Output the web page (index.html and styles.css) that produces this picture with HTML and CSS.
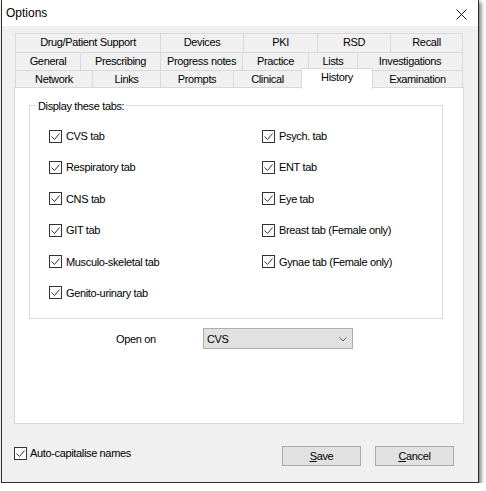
FILE: index.html
```html
<!DOCTYPE html>
<html lang="en">
<head>
<meta charset="utf-8">
<title>Options</title>
<link rel="stylesheet" href="styles.css">
</head>
<body>
<div class="window">
  <div class="titlebar">
    <span class="title">Options</span>
    <svg class="close" width="11" height="11" viewBox="0 0 11 11" aria-label="Close">
      <path d="M0.5 0.5 L10.5 10.5 M10.5 0.5 L0.5 10.5" stroke="#111" stroke-width="1" fill="none"/>
    </svg>
  </div>

  <div class="content">
    <div class="tabs">
      <div class="tab-row row1">
        <div class="tab">Drug/Patient Support</div>
        <div class="tab">Devices</div>
        <div class="tab">PKI</div>
        <div class="tab">RSD</div>
        <div class="tab">Recall</div>
      </div>
      <div class="tab-row row2">
        <div class="tab">General</div>
        <div class="tab">Prescribing</div>
        <div class="tab">Progress notes</div>
        <div class="tab">Practice</div>
        <div class="tab">Lists</div>
        <div class="tab">Investigations</div>
      </div>
      <div class="tab-row row3">
        <div class="tab">Network</div>
        <div class="tab">Links</div>
        <div class="tab">Prompts</div>
        <div class="tab">Clinical</div>
        <div class="tab active">History</div>
        <div class="tab">Examination</div>
      </div>
    </div>

    <div class="panel">
      <div class="group">
        <div class="group-title">Display these tabs:</div>
        <div class="checks">
          <label class="check"><span class="box"><svg width="11" height="11" viewBox="0 0 11 11"><path d="M1.5 5.5 L4.5 8.5 L9.5 2.5" stroke="#333" stroke-width="1" fill="none"/></svg></span>CVS tab</label>
          <label class="check"><span class="box"><svg width="11" height="11" viewBox="0 0 11 11"><path d="M1.5 5.5 L4.5 8.5 L9.5 2.5" stroke="#333" stroke-width="1" fill="none"/></svg></span>Psych. tab</label>
          <label class="check"><span class="box"><svg width="11" height="11" viewBox="0 0 11 11"><path d="M1.5 5.5 L4.5 8.5 L9.5 2.5" stroke="#333" stroke-width="1" fill="none"/></svg></span>Respiratory tab</label>
          <label class="check"><span class="box"><svg width="11" height="11" viewBox="0 0 11 11"><path d="M1.5 5.5 L4.5 8.5 L9.5 2.5" stroke="#333" stroke-width="1" fill="none"/></svg></span>ENT tab</label>
          <label class="check"><span class="box"><svg width="11" height="11" viewBox="0 0 11 11"><path d="M1.5 5.5 L4.5 8.5 L9.5 2.5" stroke="#333" stroke-width="1" fill="none"/></svg></span>CNS tab</label>
          <label class="check"><span class="box"><svg width="11" height="11" viewBox="0 0 11 11"><path d="M1.5 5.5 L4.5 8.5 L9.5 2.5" stroke="#333" stroke-width="1" fill="none"/></svg></span>Eye tab</label>
          <label class="check"><span class="box"><svg width="11" height="11" viewBox="0 0 11 11"><path d="M1.5 5.5 L4.5 8.5 L9.5 2.5" stroke="#333" stroke-width="1" fill="none"/></svg></span>GIT tab</label>
          <label class="check"><span class="box"><svg width="11" height="11" viewBox="0 0 11 11"><path d="M1.5 5.5 L4.5 8.5 L9.5 2.5" stroke="#333" stroke-width="1" fill="none"/></svg></span>Breast tab (Female only)</label>
          <label class="check"><span class="box"><svg width="11" height="11" viewBox="0 0 11 11"><path d="M1.5 5.5 L4.5 8.5 L9.5 2.5" stroke="#333" stroke-width="1" fill="none"/></svg></span>Musculo-skeletal tab</label>
          <label class="check"><span class="box"><svg width="11" height="11" viewBox="0 0 11 11"><path d="M1.5 5.5 L4.5 8.5 L9.5 2.5" stroke="#333" stroke-width="1" fill="none"/></svg></span>Gynae tab (Female only)</label>
          <label class="check"><span class="box"><svg width="11" height="11" viewBox="0 0 11 11"><path d="M1.5 5.5 L4.5 8.5 L9.5 2.5" stroke="#333" stroke-width="1" fill="none"/></svg></span>Genito-urinary tab</label>
        </div>
      </div>

      <div class="open-on">
        <span class="open-label">Open on</span>
        <div class="combo">
          <span class="combo-value">CVS</span>
          <svg class="chevron" width="8" height="5" viewBox="0 0 8 5"><path d="M0.5 0.5 L4 4 L7.5 0.5" stroke="#606060" stroke-width="1" fill="none"/></svg>
        </div>
      </div>
    </div>

    <div class="footer">
      <label class="check auto-cap"><span class="box"><svg width="11" height="11" viewBox="0 0 11 11"><path d="M1.5 5.5 L4.5 8.5 L9.5 2.5" stroke="#333" stroke-width="1" fill="none"/></svg></span>Auto-capitalise names</label>
      <div class="buttons">
        <button class="btn"><u>S</u>ave</button>
        <button class="btn"><u>C</u>ancel</button>
      </div>
    </div>
  </div>
</div>
</body>
</html>
```

FILE: styles.css
```css
html, body {
  margin: 0;
  padding: 0;
  background: #ffffff;
}

body {
  font-family: "Liberation Sans", Arial, sans-serif;
  font-size: 11px;
  letter-spacing: -0.35px;
  color: #000;
}

/* dialog frame */
.window {
  width: 478px;
  height: 484px;
  box-sizing: border-box;
  margin: -1px 0 0 1px;
  border: 1px solid #2e2e2e;
  background: #f0f0f0;
  box-shadow: 2px 3px 4px rgba(0, 0, 0, 0.55);
  display: flex;
  flex-direction: column;
}

.titlebar {
  height: 26px;
  flex: none;
  background: #ffffff;
  display: flex;
  align-items: center;
  justify-content: space-between;
  padding: 0 11px 0 4px;
}

.title {
  font-size: 12px;
  letter-spacing: 0;
  line-height: 16px;
}

.close {
  display: block;
  margin-top: 2px;
}

.content {
  flex: 1;
  padding: 7px 14px 16px 12px;
  display: flex;
  flex-direction: column;
}

/* tab strip: three stacked rows */
.tabs {
  margin-left: 1px;
}

.tab-row {
  display: grid;
}

.row1 {
  grid-template-columns: 145px 83px 74px 73px 73px;
  height: 19px;
}

.row2 {
  grid-template-columns: 65px 80px 82px 66px 49px 106px;
  height: 18px;
}

.row3 {
  grid-template-columns: 77px 68px 73px 68px 71px 91px;
  height: 17px;
}

.tab {
  border-top: 1px solid #d9d9d9;
  border-left: 1px solid #d9d9d9;
  background: #f0f0f0;
  text-align: center;
  white-space: nowrap;
  line-height: 17px;
}

.row3 .tab {
  line-height: 16px;
}

.tab:last-child {
  border-right: 1px solid #d9d9d9;
}

.tab.active {
  position: relative;
  z-index: 1;
  margin-top: -2px;
  margin-right: -1px;
  height: 20px;
  background: #ffffff;
  border-right: 1px solid #d9d9d9;
  line-height: 16px;
}

/* page body of the selected tab */
.panel {
  height: 337px;
  box-sizing: border-box;
  background: #ffffff;
  border: 1px solid #d9d9d9;
  display: flex;
  flex-direction: column;
}

.group {
  margin: 17px 0 0 14px;
  width: 414px;
  height: 214px;
  box-sizing: border-box;
  border: 1px solid #dcdcdc;
}

.group-title {
  width: fit-content;
  margin: -7px 0 0 6px;
  padding: 0 2px;
  line-height: 14px;
  background: #ffffff;
}

.checks {
  display: grid;
  grid-template-columns: 213px 1fr;
  grid-auto-rows: 14px;
  row-gap: 17.4px;
  margin-top: 16px;
  padding-left: 19px;
}

.check {
  display: flex;
  align-items: center;
  gap: 4px;
  line-height: 14px;
  white-space: nowrap;
}

.box {
  width: 13px;
  height: 13px;
  box-sizing: border-box;
  border: 1px solid #333;
  background: #ffffff;
  display: flex;
  flex: none;
}

.box svg {
  display: block;
}

.open-on {
  display: grid;
  grid-template-columns: 87px 150px;
  align-items: center;
  margin-top: 9px;
  padding-left: 101px;
}

.combo {
  height: 21px;
  box-sizing: border-box;
  border: 1px solid #adadad;
  background: #e1e1e1;
  display: flex;
  align-items: center;
  justify-content: space-between;
  padding: 0 5px 0 3px;
}

.combo-value {
  line-height: 14px;
}

.chevron {
  display: block;
  margin-top: 1px;
}

/* bottom row */
.footer {
  margin-top: 22px;
  height: 20px;
  display: flex;
  align-items: flex-start;
  justify-content: space-between;
}

.auto-cap {
  gap: 3px;
  margin-top: 0;
}

.buttons {
  display: flex;
  gap: 14px;
  margin-right: 10px;
}

.btn {
  width: 79px;
  height: 20px;
  box-sizing: border-box;
  border: 1px solid #adadad;
  background: #e1e1e1;
  font: inherit;
  letter-spacing: inherit;
  color: #000;
  padding: 0;
  line-height: 16px;
}

.btn u {
  text-decoration-thickness: 1px;
  text-underline-offset: 1px;
}
```
